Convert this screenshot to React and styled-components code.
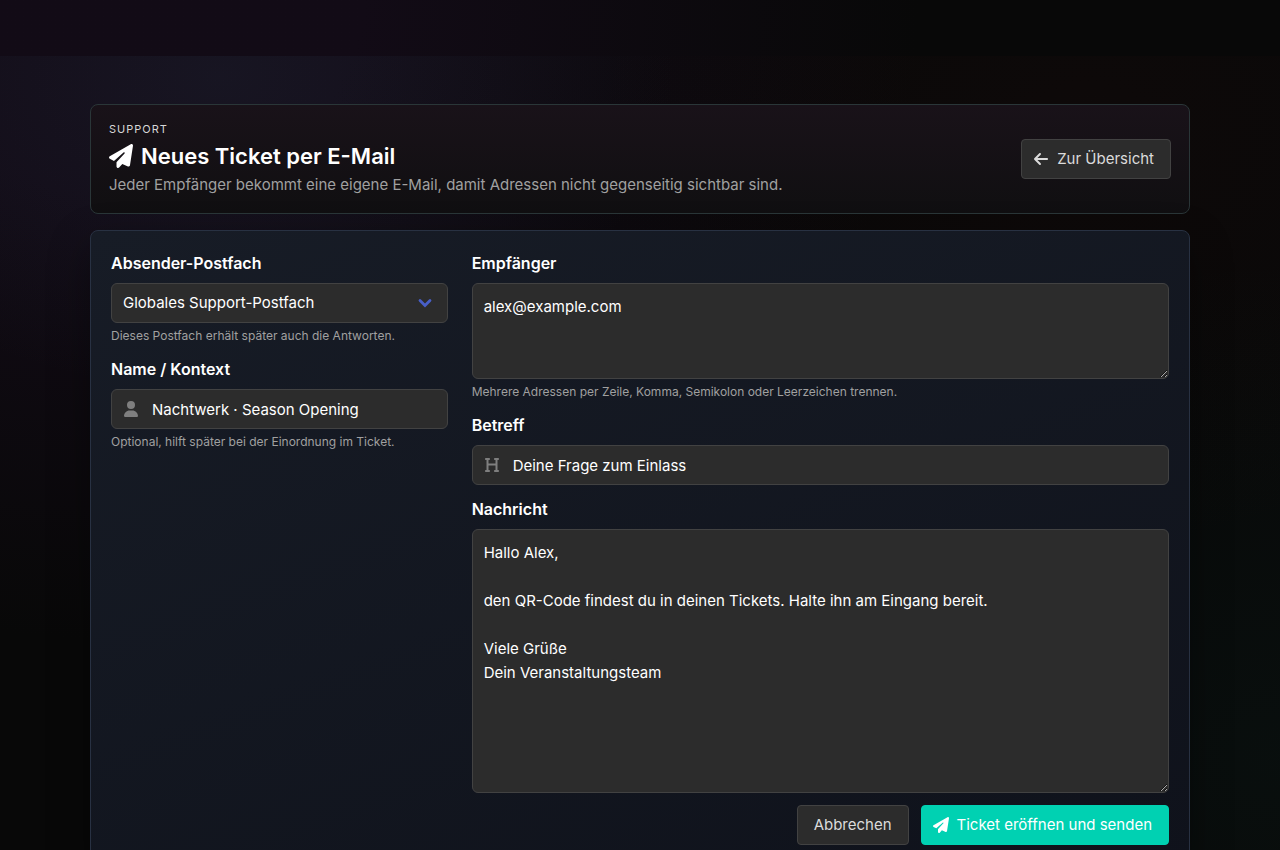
import React, { useState } from "react";
import styled, { createGlobalStyle, css } from "styled-components";
import {
  FaArrowLeft,
  FaHeading,
  FaPaperPlane,
  FaUser,
} from "react-icons/fa6";

const GlobalStyle = createGlobalStyle`
  * {
    box-sizing: border-box;
  }
  html {
    background: #080808;
    scrollbar-width: none;
  }
  body {
    margin: 0;
    color: #ffffff;
    font-family: Inter, "Open Sans", sans-serif;
    font-size: 15px;
    line-height: 24px;
  }
  button, input, select, textarea {
    font: inherit;
  }
`;

const Page = styled.div`
  min-height: 100vh;
  padding-top: 56px;
  background:
    radial-gradient(ellipse 800px 640px at 120px 0px, rgba(28, 14, 36, 0.5) 30%, transparent 100%),
    #080808;
`;

const Stage = styled.main`
  padding: 48px 24px;
  background:
    radial-gradient(ellipse 460px 320px at 220px 20px, rgba(70, 110, 140, 0.1), transparent 100%),
    radial-gradient(ellipse 500px 420px at 85% 80px, rgba(120, 30, 30, 0.05), transparent 100%),
    radial-gradient(ellipse 600px 500px at 100% 700px, rgba(20, 100, 85, 0.07), transparent 100%);
`;

const Container = styled.div`
  display: flex;
  flex-direction: column;
  gap: 16px;
  max-width: 1100px;
  margin: 0 auto;
`;

const Hero = styled.header`
  display: flex;
  align-items: center;
  justify-content: space-between;
  gap: 16px;
  padding: 16px 18px;
  border: 1px solid #2a3638;
  border-radius: 8px;
  background: linear-gradient(180deg, #191219 0%, #100f11 100%);
`;

const Eyebrow = styled.p`
  margin: 0;
  color: #d6d6d6;
  font-size: 11px;
  line-height: 16px;
  letter-spacing: 1px;
  text-transform: uppercase;
`;

const Title = styled.h1`
  display: flex;
  align-items: center;
  gap: 8px;
  margin: 2px 0 0;
  font-size: 22px;
  font-weight: 600;
  line-height: 34px;
`;

const Subtitle = styled.p`
  margin: 0;
  color: #a0a0a0;
`;

const Panel = styled.form`
  display: grid;
  grid-template-columns: repeat(12, 1fr);
  column-gap: 24px;
  padding: 20px;
  border: 1px solid #283142;
  border-radius: 8px;
  background: linear-gradient(160deg, #171c26 0%, #0f121b 100%);
  box-shadow: 0 16px 40px rgba(0, 0, 0, 0.35);
`;

const Column = styled.div`
  display: flex;
  flex-direction: column;
  gap: 12px;
  min-width: 0;
  grid-column: span ${(props) => props.$span};
`;

const Field = styled.div`
  display: flex;
  flex-direction: column;
`;

const Label = styled.label`
  margin-bottom: 8px;
  font-size: 16px;
  font-weight: 600;
`;

const Help = styled.p`
  margin: 4px 0 0;
  color: #a0a0a0;
  font-size: 12px;
  line-height: 18px;
`;

const Control = styled.div`
  position: relative;
  display: flex;
  color: #7f7f7f;
`;

const ControlIcon = styled.span`
  position: absolute;
  top: 0;
  left: 0;
  display: flex;
  align-items: center;
  justify-content: center;
  width: 40px;
  height: 40px;
  pointer-events: none;
`;

const SelectArrow = styled.svg`
  position: absolute;
  top: 14px;
  right: 16px;
  pointer-events: none;
`;

const controlStyle = css`
  width: 100%;
  margin: 0;
  border: 1px solid #424242;
  border-radius: 6px;
  outline: none;
  background: #2c2c2c;
  color: #ffffff;
  &:focus {
    border-color: #485fc7;
  }
`;

const Input = styled.input`
  ${controlStyle}
  height: 40px;
  padding: 0 11px 0 40px;
`;

const Select = styled.select`
  ${controlStyle}
  height: 40px;
  padding: 0 40px 0 11px;
  appearance: none;
`;

const TextArea = styled.textarea`
  ${controlStyle}
  display: block;
  padding: 11px;
  resize: vertical;
  height: ${(props) => props.$height};
`;

const Actions = styled.div`
  display: flex;
  justify-content: flex-end;
  gap: 12px;
`;

const buttonStyle = css`
  display: inline-flex;
  align-items: center;
  justify-content: center;
  height: 40px;
  padding: 0 16px;
  border: 1px solid ${(props) => (props.$primary ? "#00d1b2" : "#424242")};
  border-radius: 4px;
  background: ${(props) => (props.$primary ? "#00d1b2" : "#2c2c2c")};
  color: ${(props) => (props.$primary ? "#ffffff" : "#dbdbdb")};
  text-decoration: none;
  white-space: nowrap;
  cursor: pointer;
`;

const Button = styled.button`
  ${buttonStyle}
`;

const ButtonLink = styled.a`
  ${buttonStyle}
`;

const ButtonIcon = styled.span`
  display: flex;
  align-items: center;
  justify-content: center;
  width: 24px;
  height: 24px;
  margin: 0 4px 0 -9px;
`;

const initialMessage = `Hallo Alex,

den QR-Code findest du in deinen Tickets. Halte ihn am Eingang bereit.

Viele Grüße
Dein Veranstaltungsteam`;

export default function App() {
  const [mailbox, setMailbox] = useState("global");
  const [name, setName] = useState("Nachtwerk · Season Opening");
  const [recipients, setRecipients] = useState("alex@example.com");
  const [subject, setSubject] = useState("Deine Frage zum Einlass");
  const [message, setMessage] = useState(initialMessage);

  const submit = (e) => {
    e.preventDefault();
  };

  return (
    <Page>
      <GlobalStyle />
      <Stage>
        <Container>
          <Hero>
            <div>
              <Eyebrow>Support</Eyebrow>
              <Title>
                <FaPaperPlane size={24} />
                Neues Ticket per E-Mail
              </Title>
              <Subtitle>
                Jeder Empfänger bekommt eine eigene E-Mail, damit Adressen nicht
                gegenseitig sichtbar sind.
              </Subtitle>
            </div>
            <ButtonLink href="#">
              <ButtonIcon>
                <FaArrowLeft size={16} />
              </ButtonIcon>
              Zur Übersicht
            </ButtonLink>
          </Hero>

          <Panel onSubmit={submit}>
            <Column $span={4}>
              <Field>
                <Label htmlFor="mailbox">Absender-Postfach</Label>
                <Control>
                  <Select
                    id="mailbox"
                    value={mailbox}
                    onChange={(e) => setMailbox(e.target.value)}
                  >
                    <option value="global">Globales Support-Postfach</option>
                  </Select>
                  <SelectArrow width="14" height="12" viewBox="0 0 14 12" fill="none">
                    <path
                      d="M2 3.5L7 8.5L12 3.5"
                      stroke="#485fc7"
                      strokeWidth="2.8"
                      strokeLinecap="round"
                    />
                  </SelectArrow>
                </Control>
                <Help>Dieses Postfach erhält später auch die Antworten.</Help>
              </Field>
              <Field>
                <Label htmlFor="name">Name / Kontext</Label>
                <Control>
                  <Input
                    id="name"
                    type="text"
                    value={name}
                    onChange={(e) => setName(e.target.value)}
                  />
                  <ControlIcon>
                    <FaUser size={16} />
                  </ControlIcon>
                </Control>
                <Help>Optional, hilft später bei der Einordnung im Ticket.</Help>
              </Field>
            </Column>

            <Column $span={8}>
              <Field>
                <Label htmlFor="recipients">Empfänger</Label>
                <TextArea
                  id="recipients"
                  $height="96px"
                  value={recipients}
                  onChange={(e) => setRecipients(e.target.value)}
                />
                <Help>
                  Mehrere Adressen per Zeile, Komma, Semikolon oder Leerzeichen
                  trennen.
                </Help>
              </Field>
              <Field>
                <Label htmlFor="subject">Betreff</Label>
                <Control>
                  <Input
                    id="subject"
                    type="text"
                    value={subject}
                    onChange={(e) => setSubject(e.target.value)}
                  />
                  <ControlIcon>
                    <FaHeading size={16} />
                  </ControlIcon>
                </Control>
              </Field>
              <Field>
                <Label htmlFor="message">Nachricht</Label>
                <TextArea
                  id="message"
                  $height="264px"
                  value={message}
                  onChange={(e) => setMessage(e.target.value)}
                />
              </Field>
              <Actions>
                <Button type="button">Abbrechen</Button>
                <Button type="submit" $primary>
                  <ButtonIcon>
                    <FaPaperPlane size={16} />
                  </ButtonIcon>
                  Ticket eröffnen und senden
                </Button>
              </Actions>
            </Column>
          </Panel>
        </Container>
      </Stage>
    </Page>
  );
}
